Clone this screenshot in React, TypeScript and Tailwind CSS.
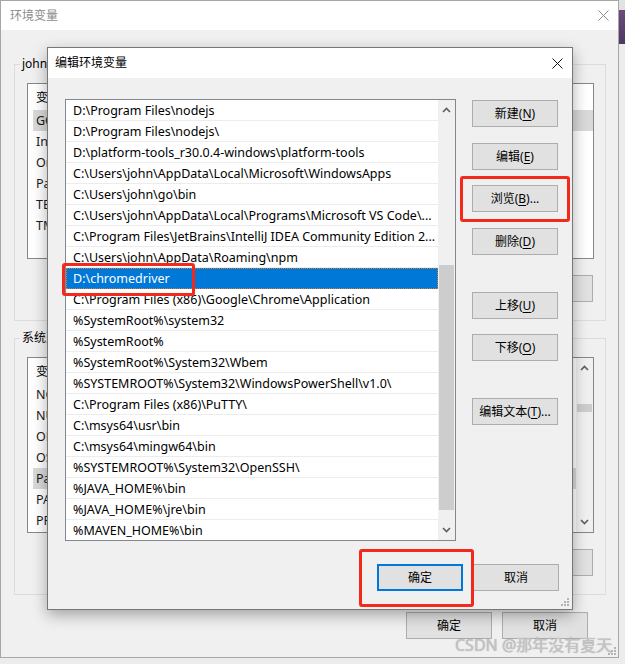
import React from "react";

const PATHS = [
  "D:\\Program Files\\nodejs",
  "D:\\Program Files\\nodejs\\",
  "D:\\platform-tools_r30.0.4-windows\\platform-tools",
  "C:\\Users\\john\\AppData\\Local\\Microsoft\\WindowsApps",
  "C:\\Users\\john\\go\\bin",
  "C:\\Users\\john\\AppData\\Local\\Programs\\Microsoft VS Code\\...",
  "C:\\Program Files\\JetBrains\\IntelliJ IDEA Community Edition 2...",
  "C:\\Users\\john\\AppData\\Roaming\\npm",
  "D:\\chromedriver",
  "C:\\Program Files (x86)\\Google\\Chrome\\Application",
  "%SystemRoot%\\system32",
  "%SystemRoot%",
  "%SystemRoot%\\System32\\Wbem",
  "%SYSTEMROOT%\\System32\\WindowsPowerShell\\v1.0\\",
  "C:\\Program Files (x86)\\PuTTY\\",
  "C:\\msys64\\usr\\bin",
  "C:\\msys64\\mingw64\\bin",
  "%SYSTEMROOT%\\System32\\OpenSSH\\",
  "%JAVA_HOME%\\bin",
  "%JAVA_HOME%\\jre\\bin",
  "%MAVEN_HOME%\\bin",
];

const USER_VARS = ["GOPATH", "IntelliJ IDEA", "OneDrive", "Path", "TEMP", "TMP"];
const SYS_VARS = [
  "NODE_PATH",
  "NUMBER_OF_PROCESSORS",
  "OPENSSL_CONF",
  "OS",
  "Path",
  "PATHEXT",
  "PROCESSOR_ARCHITECTURE",
];

function U({ children }: { children: React.ReactNode }) {
  return <span className="underline underline-offset-[2px]">{children}</span>;
}

function Button({ children, primary = false, className = "" }: { children: React.ReactNode; primary?: boolean; className?: string }) {
  return (
    <div
      className={
        primary
          ? `w-[86px] h-[27px] bg-[#e1e1e1] border-2 border-[#0078d7] flex items-center justify-center text-[12px] text-black ${className}`
          : `w-[86px] h-[27px] bg-[#e1e1e1] border border-[#adadad] flex items-center justify-center text-[12px] text-black ${className}`
      }
    >
      {children}
    </div>
  );
}

function Chevron({ up }: { up: boolean }) {
  return (
    <svg width="9" height="6" viewBox="0 0 9 6">
      <polyline
        points={up ? "1,5 4.5,1.5 8,5" : "1,1 4.5,4.5 8,1"}
        fill="none"
        stroke="#606060"
        strokeWidth="1.7"
      />
    </svg>
  );
}

function CloseX({ color }: { color: string }) {
  return (
    <svg width="11" height="11" viewBox="0 0 11 11">
      <path d="M0.5 0.5 L10.5 10.5 M10.5 0.5 L0.5 10.5" stroke={color} strokeWidth="1" />
    </svg>
  );
}

function Grip() {
  return (
    <svg width="8" height="8" viewBox="0 0 8 8">
      {[
        [6, 0],
        [3, 3],
        [6, 3],
        [0, 6],
        [3, 6],
        [6, 6],
      ].map(([x, y], i) => (
        <rect key={i} x={x} y={y} width="2" height="2" fill="#b4b4b4" />
      ))}
    </svg>
  );
}

function VarList({ rows, selected, scroll }: { rows: string[]; selected: number; scroll?: boolean }) {
  return (
    <div className="w-[567px] h-[176px] bg-white border border-[#828790] flex overflow-hidden">
      <div className="flex-1 flex flex-col">
        <div className="h-[26px] flex items-center pl-[8px] pt-[1px] text-[12px] text-black shrink-0">
          <span className="w-[180px]">变量</span>
          <span>值</span>
        </div>
        {rows.map((r, i) => (
          <div
            key={r}
            className={
              i === selected
                ? "h-[21px] shrink-0 ml-[5px] pl-[3px] pt-[1px] flex items-center text-[12.5px] text-[#1a1a1a] bg-[#d9d9d9]"
                : "h-[21px] shrink-0 ml-[5px] pl-[3px] pt-[1px] flex items-center text-[12.5px] text-[#1a1a1a]"
            }
          >
            {r}
          </div>
        ))}
      </div>
      {scroll && (
        <div className="w-[17px] bg-[#f0f0f0] flex flex-col">
          <div className="h-[20px] flex items-center justify-center">
            <Chevron up />
          </div>
          <div className="flex-1 flex flex-col pt-[26px] pb-[100px]">
            <div className="flex-1 mx-[1px] bg-[#cdcdcd]" />
          </div>
          <div className="h-[20px] flex items-center justify-center">
            <Chevron up={false} />
          </div>
        </div>
      )}
    </div>
  );
}

function GroupBox({ label, rows, selected, scroll }: { label: string; rows: string[]; selected: number; scroll?: boolean }) {
  return (
    <div className="relative w-[592px] h-[257px] border border-[#dcdcdc] pl-[12px] pt-[18px] flex flex-col">
      <span className="absolute -top-[9px] left-[5px] px-[2px] bg-[#f0f0f0] text-[12px] text-black leading-[16px]">
        {label}
      </span>
      <VarList rows={rows} selected={selected} scroll={scroll} />
      <div className="flex justify-end gap-[10px] pr-[12px] mt-[16px]">
        <Button>新建(<U>N</U>)...</Button>
        <Button>编辑(<U>I</U>)...</Button>
        <Button>删除(<U>L</U>)</Button>
      </div>
    </div>
  );
}

export default function App() {
  return (
    <div className="relative w-[625px] h-[664px] overflow-hidden bg-[#ececec] flex font-['Noto_Sans','Noto_Sans_CJK_SC',sans-serif]">
      {/* background window */}
      <div className="w-[619px] h-[658px] shrink-0 bg-[#f0f0f0] border border-[#a6a6a6] flex flex-col">
        <div className="h-[29px] bg-white flex items-center justify-between pl-[9px] pr-[9px]">
          <span className="text-[12px] text-[#8c8c8c]">环境变量</span>
          <CloseX color="#8c8c8c" />
        </div>
        <div className="flex flex-col pl-[13px] pt-[34px]">
          <GroupBox label="john 的用户变量(U)" rows={USER_VARS} selected={0} />
          <div className="h-[17px]" />
          <GroupBox label="系统变量(S)" rows={SYS_VARS} selected={4} scroll />
          <div className="flex justify-end gap-[10px] pr-[30px] mt-[17px]">
            <Button>确定</Button>
            <Button>取消</Button>
          </div>
        </div>
        <div className="flex-1 flex justify-end items-end pr-[2px] pb-[2px]">
          <Grip />
        </div>
      </div>
      {/* desktop strip */}
      <div className="flex-1 flex flex-col">
        <div className="h-[10px] bg-[#e2e2e2]" />
        <div className="h-[34px] bg-gradient-to-b from-[#6d4a7e] to-[#4b3a63]" />
        <div className="flex-1 bg-[#ececec]" />
      </div>

      {/* edit dialog */}
      <div className="absolute left-[47px] top-[47px] w-[526px] h-[563px] bg-[#f0f0f0] border border-[#777777] shadow-[0_5px_14px_rgba(0,0,0,0.32)] flex flex-col">
        <div className="h-[30px] bg-white flex items-center justify-between pl-[7px] pr-[9px] shrink-0">
          <span className="text-[12px] text-black">编辑环境变量</span>
          <CloseX color="#111111" />
        </div>
        <div className="flex pl-[17px] pt-[21px]">
          <div className="w-[391px] h-[442px] bg-white border border-[#828790] flex overflow-hidden">
            <div className="flex-1 flex flex-col">
              {PATHS.map((p, i) => (
                <div
                  key={p}
                  className={
                    i === 8
                      ? "h-[21px] shrink-0 flex items-center pl-[7px] pt-[2px] text-[12.5px] text-white bg-[#0078d7] outline outline-1 outline-dotted outline-[#d08030] -outline-offset-1 whitespace-nowrap"
                      : "h-[21px] shrink-0 flex items-center pl-[7px] pt-[2px] text-[12.5px] text-black border-b border-[#ececec] whitespace-nowrap"
                  }
                >
                  {p}
                </div>
              ))}
            </div>
            <div className="w-[17px] bg-[#f0f0f0] flex flex-col">
              <div className="h-[20px] flex items-center justify-center">
                <Chevron up />
              </div>
              <div className="flex-1 flex flex-col pt-[145px] pb-[10px]">
                <div className="flex-1 mx-[1px] bg-[#cdcdcd]" />
              </div>
              <div className="h-[20px] flex items-center justify-center">
                <Chevron up={false} />
              </div>
            </div>
          </div>
          <div className="ml-[16px] flex flex-col">
            <Button className="mt-[1px]">新建(<U>N</U>)</Button>
            <Button className="mt-[16px]">编辑(<U>E</U>)</Button>
            <Button className="mt-[15px]">浏览(<U>B</U>)...</Button>
            <Button className="mt-[16px]">删除(<U>D</U>)</Button>
            <Button className="mt-[37px]">上移(<U>U</U>)</Button>
            <Button className="mt-[15px]">下移(<U>O</U>)</Button>
            <Button className="mt-[37px]">编辑文本(<U>T</U>)...</Button>
          </div>
        </div>
        <div className="flex justify-end gap-[10px] pr-[13px] mt-[23px]">
          <Button primary>确定</Button>
          <Button>取消</Button>
        </div>
        <div className="flex-1 flex justify-end items-end pr-[3px] pb-[3px]">
          <Grip />
        </div>
      </div>

      {/* red annotation boxes */}
      <div className="absolute left-[62px] top-[263px] w-[133px] h-[33px] border-[3px] border-[#f5281c] rounded-[3px]" />
      <div className="absolute left-[460px] top-[176px] w-[110px] h-[46px] border-[3px] border-[#f5281c] rounded-[3px]" />
      <div className="absolute left-[359px] top-[549px] w-[115px] h-[58px] border-[3px] border-[#f5281c] rounded-[3px]" />

      {/* watermark */}
      <div className="absolute left-[455px] top-[634px] text-[16px] leading-[22px] text-[#c4c4c4] [text-shadow:0_0_1px_rgba(90,90,90,0.5)] whitespace-nowrap">
        CSDN @那年没有夏天
      </div>
    </div>
  );
}
